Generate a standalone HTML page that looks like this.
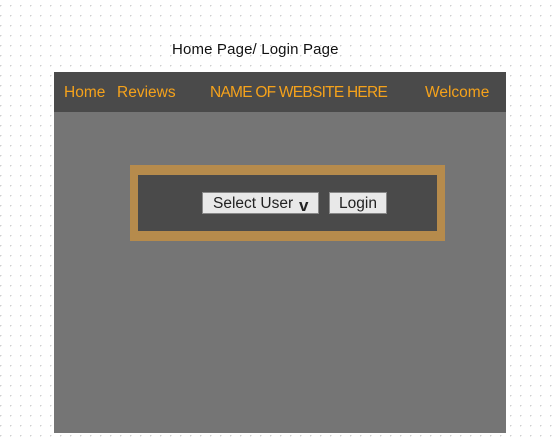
<!DOCTYPE html>
<html><head><style>
html,body{margin:0;padding:0}
body{width:554px;height:441px;position:relative;overflow:hidden;background-color:#fff;
background-image:radial-gradient(circle at 0.5px 0.5px,#d0d0d0 0.8px,transparent 1px);
background-size:10px 10px;background-position:0px 5px;font-family:"Liberation Sans",sans-serif}
.t{position:absolute;left:172px;top:41px;font-size:15px;color:#111;letter-spacing:0.15px}
.frame{position:absolute;left:54px;top:72px;width:452px;height:361px;background:#757575}
.hdr{position:absolute;left:0;top:0;width:452px;height:40px;background:#4a4a4a;color:#f5a21b;font-size:15.5px}
.hdr span{position:absolute;top:12px}
.box{position:absolute;left:76px;top:93px;width:299px;height:56px;border:8px solid #b68b4c;border-top-width:10px;border-bottom-width:10px;background:#4a4a4a}
.btn{position:absolute;top:120px;height:22px;background:#e8e8e8;border:1px solid #888;box-sizing:border-box;font-size:15.5px;color:#222;line-height:22px}
</style></head><body>
<div class="t">Home Page/ Login Page</div>
<div class="frame">
<div class="hdr"><span style="left:10px">Home</span><span style="left:63px">Reviews</span><span style="left:156px;letter-spacing:-0.75px">NAME OF WEBSITE HERE</span><span style="left:371px">Welcome</span></div>
<div class="box"></div>
<div class="btn" style="left:148px;width:117px;padding-left:10px">Select User <b style="position:absolute;left:96px;top:2px;font-size:17px">v</b></div>
<div class="btn" style="left:275px;width:58px;text-align:center">Login</div>
</div>
</body></html>
